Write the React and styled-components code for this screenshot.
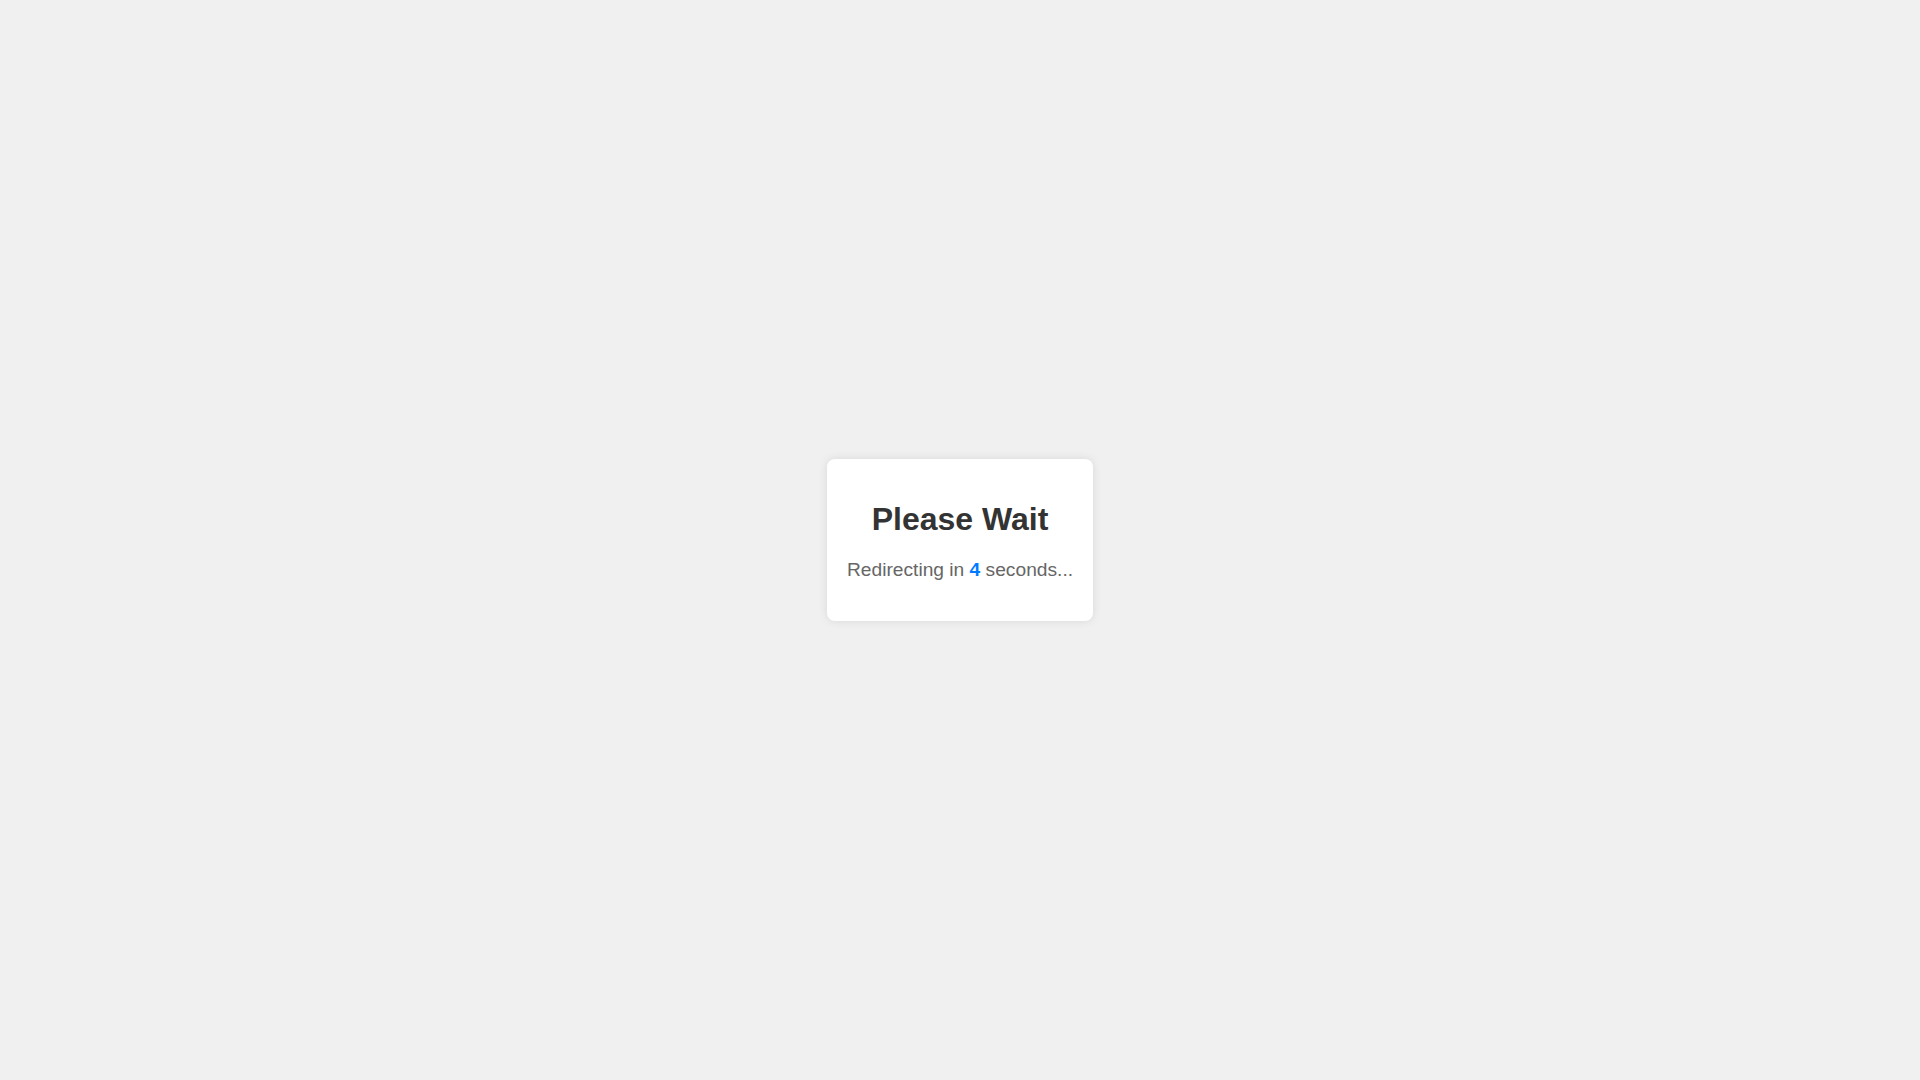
import React from 'react';
import styled, { createGlobalStyle } from 'styled-components';

const GlobalStyle = createGlobalStyle`
  html, body {
    margin: 0;
    padding: 0;
    height: 100%;
  }
  body {
    background: #f0f0f0;
    font-family: "Liberation Sans", Arial, sans-serif;
  }
  #root {
    height: 100%;
  }
`;

const Page = styled.div`
  min-height: 100vh;
  display: flex;
  align-items: center;
  justify-content: center;
`;

const Card = styled.div`
  background: #fff;
  border-radius: 8px;
  box-shadow: 0 0 10px rgba(0, 0, 0, 0.1);
  padding: 42px 20px 40px;
  text-align: center;
`;

const Title = styled.h1`
  margin: 0 0 21px;
  font-size: 32px;
  font-weight: bold;
  color: #333;
`;

const Message = styled.p`
  margin: 0;
  font-size: 19.2px;
  color: #666;
`;

const Count = styled.span`
  color: #007bff;
  font-weight: bold;
`;

const App = () => {
  return (
    <>
      <GlobalStyle />
      <Page>
        <Card>
          <Title>Please Wait</Title>
          <Message>
            Redirecting in <Count>4</Count> seconds...
          </Message>
        </Card>
      </Page>
    </>
  );
};

export default App;
